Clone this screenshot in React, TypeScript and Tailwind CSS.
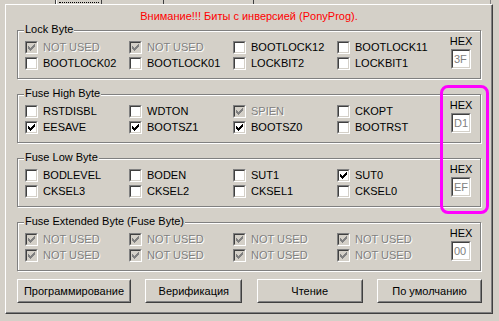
import React from 'react';

type Bit = { label: string; checked?: boolean; disabled?: boolean };

const NU: Bit = { label: 'NOT USED', checked: true, disabled: true };

const groups: { title: string; hex: string; bits: Bit[] }[] = [
    {
        title: 'Lock Byte',
        hex: '3F',
        bits: [
            NU, NU, { label: 'BOOTLOCK12' }, { label: 'BOOTLOCK11' },
            { label: 'BOOTLOCK02' }, { label: 'BOOTLOCK01' }, { label: 'LOCKBIT2' }, { label: 'LOCKBIT1' },
        ],
    },
    {
        title: 'Fuse High Byte',
        hex: 'D1',
        bits: [
            { label: 'RSTDISBL' }, { label: 'WDTON' }, { label: 'SPIEN', checked: true, disabled: true }, { label: 'CKOPT' },
            { label: 'EESAVE', checked: true }, { label: 'BOOTSZ1', checked: true }, { label: 'BOOTSZ0', checked: true }, { label: 'BOOTRST' },
        ],
    },
    {
        title: 'Fuse Low Byte',
        hex: 'EF',
        bits: [
            { label: 'BODLEVEL' }, { label: 'BODEN' }, { label: 'SUT1' }, { label: 'SUT0', checked: true },
            { label: 'CKSEL3' }, { label: 'CKSEL2' }, { label: 'CKSEL1' }, { label: 'CKSEL0' },
        ],
    },
    {
        title: 'Fuse Extended Byte (Fuse Byte)',
        hex: '00',
        bits: [NU, NU, NU, NU, NU, NU, NU, NU],
    },
];

// classic 7x7 pixel check mark
const CHECK_PATH =
    'M6 0h1v1h-1z M5 1h2v1h-2z M0 2h1v1h-1z M4 2h3v1h-3z M0 3h2v1h-2z M3 3h3v1h-3z M0 4h5v1h-5z M1 5h3v1h-3z M2 6h1v1h-1z';

const CheckBox: React.FC<Bit> = ({ label, checked, disabled }) => (
    <div className="flex items-center h-[13px]">
        <span className="flex w-[13px] h-[13px] shrink-0 border border-t-[#808080] border-l-[#808080] border-b-white border-r-white">
            <span
                className={`flex-1 border border-t-[#404040] border-l-[#404040] border-b-[#d4d0c8] border-r-[#d4d0c8] ${
                    disabled ? 'bg-[#d4d0c8]' : 'bg-white'
                }`}
            >
                {checked && (
                    <svg width="7" height="7" viewBox="0 0 7 7" className="m-[1px]" shapeRendering="crispEdges">
                        <path d={CHECK_PATH} fill={disabled ? '#808080' : '#000'} />
                    </svg>
                )}
            </span>
        </span>
        <span
            className={`ml-[5px] leading-[13px] whitespace-nowrap ${
                disabled ? 'text-[#808080] [text-shadow:1px_1px_0_#fff]' : 'text-black'
            }`}
        >
            {label}
        </span>
    </div>
);

const Button: React.FC<{ label: string; width: string }> = ({ label, width }) => (
    <button
        className={`${width} h-[24px] flex border border-t-white border-l-white border-b-[#404040] border-r-[#404040] bg-[#d4d0c8]`}
    >
        <span className="flex-1 flex items-center justify-center border border-t-[#d4d0c8] border-l-[#d4d0c8] border-b-[#808080] border-r-[#808080] text-black leading-[13px]">
            {label}
        </span>
    </button>
);

const App: React.FC = () => {
    return (
        <div className="relative w-[499px] h-[321px] overflow-hidden bg-[#d4d0c8] text-[11px] font-['Liberation_Sans',Arial,sans-serif]">
            {/* tab strip remains */}
            <div className="flex h-[4px]">
                <div className="w-[56px] border-r border-[#404040]" />
                <div className="w-[46px] border-l border-white border-r border-r-[#404040] px-[2px] pt-[2px]">
                    <div className="border-t border-dotted border-black" />
                </div>
                <div className="w-[62px] border-r border-[#404040]" />
                <div className="w-[90px] border-r border-[#404040]" />
                <div className="w-[237px] border-r border-[#808080]" />
            </div>

            {/* tab page */}
            <div className="ml-[5px] w-[488px] h-[310px] flex flex-col border border-t-white border-l-white border-b-[#404040] border-r-[#404040] shadow-[inset_-1px_-1px_0_#808080]">
                <div className="mt-[5px] h-[13px] leading-[13px] text-center text-[#ff0000]">
                    Внимание!!! Биты с инверсией (PonyProg).
                </div>

                <div className="mt-[7px] ml-[11px] flex flex-col gap-[15px]">
                    {groups.map(g => (
                        <div
                            key={g.title}
                            className="relative w-[464px] h-[49px] flex border border-[#808080] shadow-[inset_1px_1px_0_#fff,1px_1px_0_#fff]"
                        >
                            <span className="absolute -top-[8px] left-[6px] px-[1px] bg-[#d4d0c8] leading-[13px] text-black">
                                {g.title}
                            </span>
                            <div className="pt-[10px] pl-[7px] grid grid-cols-[104px_104px_104px_104px] gap-y-[3px] content-start">
                                {g.bits.map((b, i) => (
                                    <CheckBox key={i} {...b} />
                                ))}
                            </div>
                            <div className="ml-[9px] pt-[4px] w-[22px] flex flex-col items-center">
                                <span className="leading-[13px] text-black">HEX</span>
                                <span className="mt-[1px] w-[20px] h-[20px] flex border border-t-[#808080] border-l-[#808080] border-b-white border-r-white">
                                    <span className="flex-1 flex items-center pl-[1px] bg-white text-[#808080] border border-t-[#404040] border-l-[#404040] border-b-[#d4d0c8] border-r-[#d4d0c8] leading-[13px]">
                                        {g.hex}
                                    </span>
                                </span>
                            </div>
                        </div>
                    ))}
                </div>

                <div className="mt-[8px] ml-[11px] w-[465px] flex justify-between">
                    <Button label="Программирование" width="w-[114px]" />
                    <Button label="Верификация" width="w-[97px]" />
                    <Button label="Чтение" width="w-[106px]" />
                    <Button label="По умолчанию" width="w-[105px]" />
                </div>
            </div>

            {/* highlight annotation */}
            <div className="absolute left-[440px] top-[85px] w-[49px] h-[129px] rounded-[8px] border-[3px] border-[#ff00ff]" />
        </div>
    );
};

export default App;
